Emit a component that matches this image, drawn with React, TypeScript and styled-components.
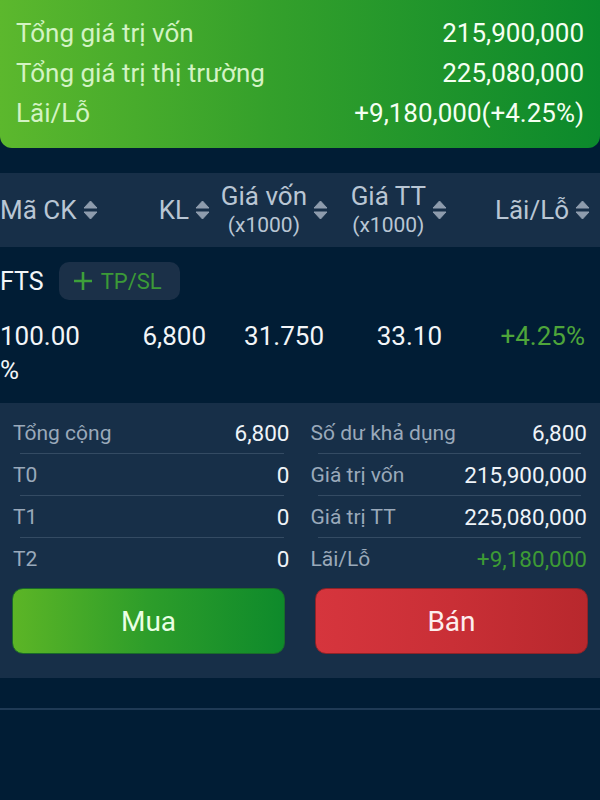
import React from "react";
import styled, { createGlobalStyle } from "styled-components";

const GlobalStyle = createGlobalStyle`
  html, body {
    margin: 0;
    padding: 0;
    background: #011d35;
  }
  body {
    font-family: Roboto, "Noto Sans", "Liberation Sans", sans-serif;
    color: #e8eef4;
    overflow: hidden;
  }
`;

const Page = styled.div`
  width: 600px;
  height: 800px;
  background: #011d35;
  overflow: hidden;
`;

const SummaryCard = styled.section`
  background: linear-gradient(90deg, #5cb82d 0%, #34a02b 45%, #0b892c 100%);
  border-radius: 0 0 12px 12px;
  padding: 13px 16px 15px 16px;
`;

const CardRow = styled.div`
  display: flex;
  justify-content: space-between;
  align-items: center;
  height: 40px;
  font-size: 26px;
`;

const CardLabel = styled.span`
  color: #d3f3c4;
`;

const CardValue = styled.span`
  color: #f5fff2;
`;

const TableHeader = styled.div`
  margin-top: 25px;
  height: 74px;
  background: #172f48;
  display: grid;
  grid-template-columns: 130px 85px 120px 120px 1fr;
  align-items: center;
  color: #b9c6d4;
`;

const HeadCell = styled.div<{ $padRight?: number; $left?: boolean }>`
  display: flex;
  align-items: center;
  justify-content: ${(p) => (p.$left ? "flex-start" : "flex-end")};
  gap: 6px;
  padding-right: ${(p) => p.$padRight ?? 0}px;
  font-size: 26px;
`;

const HeadText = styled.div`
  display: flex;
  flex-direction: column;
  align-items: center;
  line-height: 30px;
`;

const HeadUnit = styled.span`
  font-size: 21px;
  line-height: 28px;
`;

const SortIcon = () => (
  <svg width="15" height="20" viewBox="0 0 15 20">
    <path d="M7.5 1 L14 8 L1 8 Z" fill="#8e9cad" strokeLinejoin="round" stroke="#8e9cad" strokeWidth="1" />
    <path d="M1 12 L14 12 L7.5 19 Z" fill="#8e9cad" strokeLinejoin="round" stroke="#8e9cad" strokeWidth="1" />
  </svg>
);

const SymbolRow = styled.div`
  display: flex;
  align-items: center;
  gap: 15px;
  margin-top: 15px;
  height: 38px;
`;

const Symbol = styled.span`
  font-size: 25px;
  color: #f2f5f8;
`;

const TpSlButton = styled.button`
  display: flex;
  align-items: center;
  gap: 8px;
  height: 38px;
  padding: 0 14px;
  width: 121px;
  border: none;
  border-radius: 10px;
  background: #1b3048;
  color: #3b9a37;
  font-family: inherit;
  font-size: 22px;
`;

const PlusIcon = () => (
  <svg width="20" height="20" viewBox="0 0 20 20">
    <path d="M10 1 V19 M1 10 H19" stroke="#3da03a" strokeWidth="2.6" />
  </svg>
);

const DataRow = styled.div`
  display: grid;
  grid-template-columns: 130px 85px 120px 120px 1fr;
  align-items: start;
  margin-top: 19px;
  font-size: 26px;
  line-height: 34px;
  color: #f2f5f8;
`;

const DataCell = styled.div<{ $padRight?: number; $left?: boolean; $gain?: boolean }>`
  text-align: ${(p) => (p.$left ? "left" : "right")};
  padding-right: ${(p) => p.$padRight ?? 0}px;
  color: ${(p) => (p.$gain ? "#4ea53a" : "inherit")};
`;

// narrow cell: the percent sign wraps onto its own line
const Ratio = styled.div`
  width: 88px;
  overflow-wrap: anywhere;
`;

const Panel = styled.section`
  margin-top: 16px;
  background: #172f48;
  padding: 9px 13px 24px 13px;
`;

const PanelGrid = styled.div`
  display: grid;
  grid-template-columns: 1fr 1fr;
  column-gap: 21px;
`;

const Column = styled.div`
  display: flex;
  flex-direction: column;
`;

const InfoRow = styled.div`
  display: flex;
  justify-content: space-between;
  align-items: center;
  height: 41px;
`;

const InfoLabel = styled.span`
  font-size: 21px;
  color: #9aa9ba;
`;

const InfoValue = styled.span<{ $gain?: boolean }>`
  font-size: 22.5px;
  color: ${(p) => (p.$gain ? "#3d9a35" : "#eef3f8")};
`;

const Separator = styled.div`
  height: 1px;
  margin: 0 6px 0 7px;
  background: #344b63;
`;

const Actions = styled.div`
  display: grid;
  grid-template-columns: 1fr 1fr;
  column-gap: 30px;
  margin: 9px -1px 0 -1px;
`;

const ActionButton = styled.button<{ $kind: "buy" | "sell" }>`
  height: 66px;
  border-radius: 11px;
  border: 1px solid ${(p) => (p.$kind === "buy" ? "#1a6b2a" : "#8e2328")};
  background: ${(p) =>
    p.$kind === "buy"
      ? "linear-gradient(90deg, #5cb526 0%, #2d9d2a 50%, #0e8a2b 100%)"
      : "linear-gradient(90deg, #d6353d 0%, #c92f36 50%, #b8282d 100%)"};
  color: ${(p) => (p.$kind === "buy" ? "#eaffe4" : "#fdeeee")};
  font-family: inherit;
  font-size: 28px;
`;

const Divider = styled.div`
  margin-top: 30px;
  height: 2px;
  background: #1f3a55;
`;

type Info = { label: string; value: string; gain?: boolean };

const leftInfo: Info[] = [
  { label: "Tổng cộng", value: "6,800" },
  { label: "T0", value: "0" },
  { label: "T1", value: "0" },
  { label: "T2", value: "0" },
];

const rightInfo: Info[] = [
  { label: "Số dư khả dụng", value: "6,800" },
  { label: "Giá trị vốn", value: "215,900,000" },
  { label: "Giá trị TT", value: "225,080,000" },
  { label: "Lãi/Lỗ", value: "+9,180,000", gain: true },
];

const InfoColumn = ({ items }: { items: Info[] }) => (
  <Column>
    {items.map((it, i) => (
      <React.Fragment key={it.label}>
        {i > 0 && <Separator />}
        <InfoRow>
          <InfoLabel>{it.label}</InfoLabel>
          <InfoValue $gain={it.gain}>{it.value}</InfoValue>
        </InfoRow>
      </React.Fragment>
    ))}
  </Column>
);

export default function App() {
  return (
    <Page>
      <GlobalStyle />
      <SummaryCard>
        <CardRow>
          <CardLabel>Tổng giá trị vốn</CardLabel>
          <CardValue>215,900,000</CardValue>
        </CardRow>
        <CardRow>
          <CardLabel>Tổng giá trị thị trường</CardLabel>
          <CardValue>225,080,000</CardValue>
        </CardRow>
        <CardRow>
          <CardLabel>Lãi/Lỗ</CardLabel>
          <CardValue>+9,180,000(+4.25%)</CardValue>
        </CardRow>
      </SummaryCard>

      <TableHeader>
        <HeadCell $left>
          <span>Mã CK</span>
          <SortIcon />
        </HeadCell>
        <HeadCell $padRight={5}>
          <span>KL</span>
          <SortIcon />
        </HeadCell>
        <HeadCell $padRight={7}>
          <HeadText>
            <span>Giá vốn</span>
            <HeadUnit>(x1000)</HeadUnit>
          </HeadText>
          <SortIcon />
        </HeadCell>
        <HeadCell $padRight={8}>
          <HeadText>
            <span>Giá TT</span>
            <HeadUnit>(x1000)</HeadUnit>
          </HeadText>
          <SortIcon />
        </HeadCell>
        <HeadCell $padRight={10}>
          <span>Lãi/Lỗ</span>
          <SortIcon />
        </HeadCell>
      </TableHeader>

      <SymbolRow>
        <Symbol>FTS</Symbol>
        <TpSlButton>
          <PlusIcon />
          TP/SL
        </TpSlButton>
      </SymbolRow>

      <DataRow>
        <DataCell $left>
          <Ratio>100.00%</Ratio>
        </DataCell>
        <DataCell $padRight={9}>6,800</DataCell>
        <DataCell $padRight={11}>31.750</DataCell>
        <DataCell $padRight={13}>33.10</DataCell>
        <DataCell $padRight={15} $gain>
          +4.25%
        </DataCell>
      </DataRow>

      <Panel>
        <PanelGrid>
          <InfoColumn items={leftInfo} />
          <InfoColumn items={rightInfo} />
        </PanelGrid>
        <Actions>
          <ActionButton $kind="buy">Mua</ActionButton>
          <ActionButton $kind="sell">Bán</ActionButton>
        </Actions>
      </Panel>

      <Divider />
    </Page>
  );
}
